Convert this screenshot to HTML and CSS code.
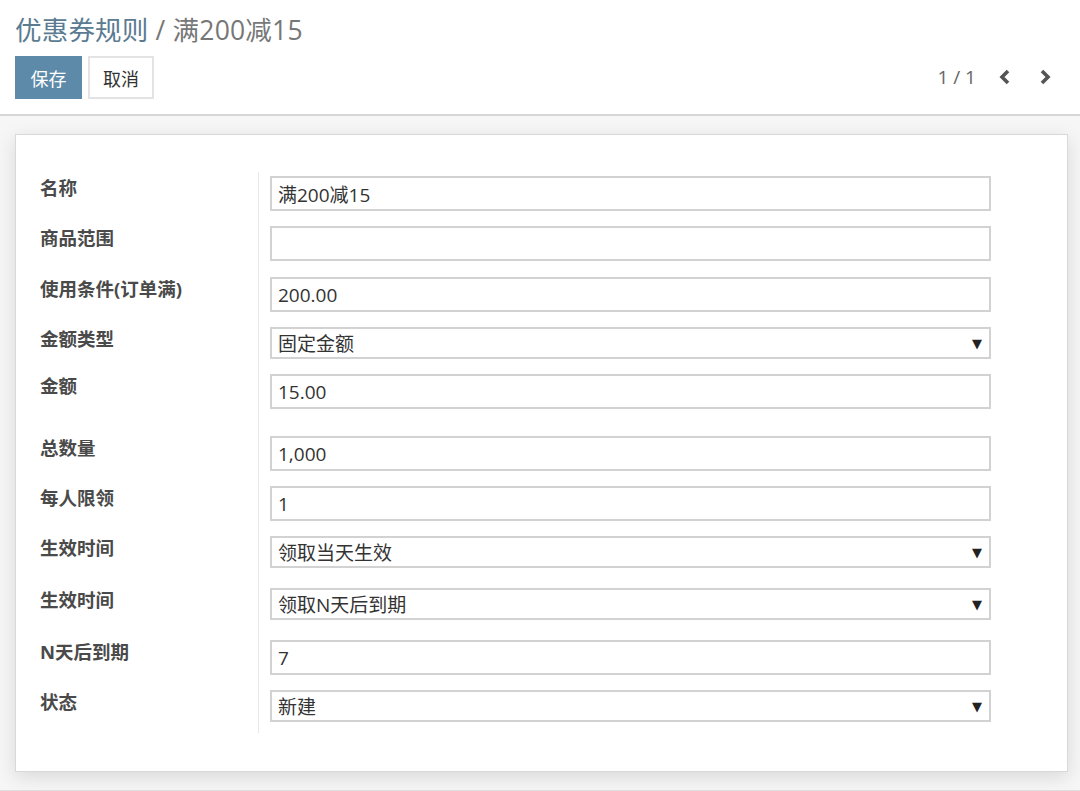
FILE: index.html
```html
<!DOCTYPE html>
<html lang="zh">
<head>
<meta charset="utf-8">
<title>优惠券规则 / 满200减15</title>
<link rel="stylesheet" href="styles.css">
</head>
<body>
<header class="cp">
  <h1 class="crumbs"><span class="crumb-link">优惠券规则</span> <span class="crumb-sep">/</span> <span class="crumb-cur">满200减15</span></h1>
  <div class="cp-bottom">
    <div class="btns">
      <button class="btn btn-primary">保存</button>
      <button class="btn btn-default">取消</button>
    </div>
    <div class="pager">
      <span class="pager-val">1 / 1</span>
      <span class="pager-btn"><svg width="14" height="18" viewBox="0 0 14 18"><polyline points="10,3 4,9 10,15" fill="none" stroke="#555" stroke-width="3.6" stroke-linejoin="miter"/></svg></span>
      <span class="pager-btn"><svg width="14" height="18" viewBox="0 0 14 18"><polyline points="4,3 10,9 4,15" fill="none" stroke="#555" stroke-width="3.6" stroke-linejoin="miter"/></svg></span>
    </div>
  </div>
</header>
<main class="content">
  <section class="sheet">
    <div class="form">
      <div class="lbl">名称</div>
      <div class="fld f-in"><input class="inp" value="满200减15"></div>

      <div class="lbl">商品范围</div>
      <div class="fld f-in f-in2"><input class="inp" value=""></div>

      <div class="lbl">使用条件(订单满)</div>
      <div class="fld f-in"><input class="inp" value="200.00"></div>

      <div class="lbl">金额类型</div>
      <div class="fld f-sel"><div class="sel"><span>固定金额</span><span class="caret">▼</span></div></div>

      <div class="lbl">金额</div>
      <div class="fld f-in f-group-end"><input class="inp" value="15.00"></div>

      <div class="lbl">总数量</div>
      <div class="fld f-in"><input class="inp" value="1,000"></div>

      <div class="lbl">每人限领</div>
      <div class="fld f-in"><input class="inp" value="1"></div>

      <div class="lbl">生效时间</div>
      <div class="fld f-sel f-sel2"><div class="sel"><span>领取当天生效</span><span class="caret">▼</span></div></div>

      <div class="lbl">生效时间</div>
      <div class="fld f-sel f-sel2"><div class="sel"><span>领取N天后到期</span><span class="caret">▼</span></div></div>

      <div class="lbl">N天后到期</div>
      <div class="fld f-in"><input class="inp" value="7"></div>

      <div class="lbl">状态</div>
      <div class="fld f-last"><div class="sel"><span>新建</span><span class="caret">▼</span></div></div>
    </div>
  </section>
</main>
</body>
</html>
```
FILE: styles.css
```css
* { box-sizing: border-box; }
html, body { margin: 0; padding: 0; }
body {
  font-family: "Open Sans", "Noto Sans CJK SC", sans-serif;
  background: #f6f6f6;
  color: #333;
  width: 1080px;
  height: 791px;
  overflow: hidden;
}

.cp {
  background: #fff;
  height: 116px;
  border-bottom: 2px solid #d6d6d6;
  padding: 13px 28px 0 15px;
}
.crumbs {
  margin: 0 0 9px 0;
  font-weight: normal;
  font-size: 26.5px;
  line-height: 34px;
  height: 34px;
  white-space: nowrap;
  letter-spacing: 0.2px;
}
.crumb-link { color: #5a7b91; }
.crumb-sep { color: #777; }
.crumb-cur { color: #777; }

.cp-bottom {
  display: flex;
  justify-content: space-between;
  align-items: center;
}
.btns { display: flex; gap: 6px; }
.btn {
  font-family: "Open Sans", "Noto Sans CJK SC", sans-serif;
  font-size: 18px;
  height: 43px;
  padding: 0 13px;
  border-radius: 0;
  cursor: pointer;
}
.btn-primary {
  background: #5d8aa8;
  color: #fff;
  border: 1px solid #5d8aa8;
  width: 67px;
}
.btn-default {
  background: #fff;
  color: #333;
  border: 2px solid #e3e3e3;
  width: 66px;
}

.pager {
  display: flex;
  align-items: center;
  color: #666;
  font-size: 19px;
  margin-top: -2px;
}
.pager-val { margin-right: 22px; }
.pager-btn { display: flex; width: 14px; height: 18px; }
.pager-btn + .pager-btn { margin-left: 26px; }

.content {
  padding: 18px 12px 17px 15px;
  height: 675px;
  border-bottom: 1px solid #e0e0e0;
}
.sheet {
  background: #fff;
  border: 1px solid #d9d9d9;
  box-shadow: 0 5px 18px rgba(0, 0, 0, 0.12);
  padding: 37px 76px 38px 24px;
  height: 638px;
}

.form {
  display: grid;
  grid-template-columns: 218px 1fr;
  padding: 4px 0 11px 0;
  background: linear-gradient(#e8e8e8, #e8e8e8) 218px 0 / 1px 100% no-repeat;
}
.lbl {
  font-weight: bold;
  font-size: 18.5px;
  line-height: 24px;
  color: #4a4a4a;
  white-space: nowrap;
}
.fld { padding-left: 12px; }
.f-in { padding-bottom: 15px; }
.f-in2 { padding-bottom: 16px; }
.f-group-end { padding-bottom: 27px; }
.f-sel { padding-bottom: 15px; }
.f-sel2 { padding-bottom: 20px; }
.f-last { padding-bottom: 0; }

.inp {
  display: block;
  width: 100%;
  height: 35px;
  border: 2px solid #d2d2d2;
  padding: 0 6px;
  font-family: "Open Sans", "Noto Sans CJK SC", sans-serif;
  font-size: 19px;
  color: #333;
  background: #fff;
  outline: none;
  border-radius: 0;
}
.sel {
  display: flex;
  justify-content: space-between;
  align-items: center;
  height: 32px;
  border: 2px solid #d2d2d2;
  padding: 0 7px 0 6px;
  font-size: 19px;
  color: #333;
  background: #fff;
}
.caret {
  font-family: "DejaVu Sans", sans-serif;
  font-size: 13px;
  color: #222;
}
```
